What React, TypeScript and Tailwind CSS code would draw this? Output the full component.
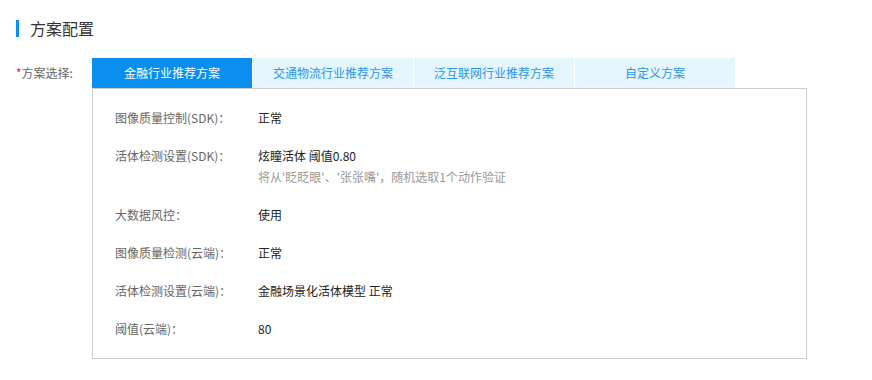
import { useState } from "react";

const tabs = ["金融行业推荐方案", "交通物流行业推荐方案", "泛互联网行业推荐方案", "自定义方案"];

type Row = { label: string; value: string; note?: string };

const rows: Row[] = [
	{ label: "图像质量控制(SDK)：", value: "正常" },
	{
		label: "活体检测设置(SDK)：",
		value: "炫瞳活体 阈值0.80",
		note: "将从'眨眨眼'、'张张嘴'，随机选取1个动作验证",
	},
	{ label: "大数据风控：", value: "使用" },
	{ label: "图像质量检测(云端)：", value: "正常" },
	{ label: "活体检测设置(云端)：", value: "金融场景化活体模型 正常" },
	{ label: "阈值(云端)：", value: "80" },
];

export default function App() {
	const [activeTab, setActiveTab] = useState(tabs[0]);

	return (
		<div className="min-h-[380px] w-[872px] bg-white font-['Noto_Sans_CJK_SC','Noto_Sans',sans-serif]">
			{/* TITLE */}
			<div className="flex items-center pl-4 pt-5">
				<span className="h-[17px] w-[3px] bg-[#0a8ff0]" />
				<h2 className="ml-[11px] text-[16px] leading-[17px] text-[#333]">方案配置</h2>
			</div>

			<div className="mt-[21px] flex pl-4">
				<div className="w-[76px] pt-[6px] text-[12px] leading-[18px] text-[#666]">
					<span className="text-[#f5222d]">*</span>方案选择:
				</div>
				<div>
					{/* TABS */}
					<div className="flex gap-px">
						{tabs.map((tab) => (
							<button
								key={tab}
								type="button"
								onClick={() => setActiveTab(tab)}
								className={`h-[30px] w-[160px] text-[12px] ${
									activeTab === tab
										? "bg-[#0a8ff0] text-white"
										: "bg-[#e4f5fe] text-[#2b95ea]"
								}`}
							>
								{tab}
							</button>
						))}
					</div>
					{/* CONTENT */}
					<div className="flex w-[715px] flex-col gap-[18px] border border-[#cccccc] py-[19px] pl-[22px]">
						{rows.map((row) => (
							<div key={row.label} className="flex text-[12px] leading-[20px]">
								<div className="w-[143px] text-[#666]">{row.label}</div>
								<div>
									<div className="text-[#222]">{row.value}</div>
									{row.note && <div className="mt-px text-[#999]">{row.note}</div>}
								</div>
							</div>
						))}
					</div>
				</div>
			</div>
		</div>
	);
}
